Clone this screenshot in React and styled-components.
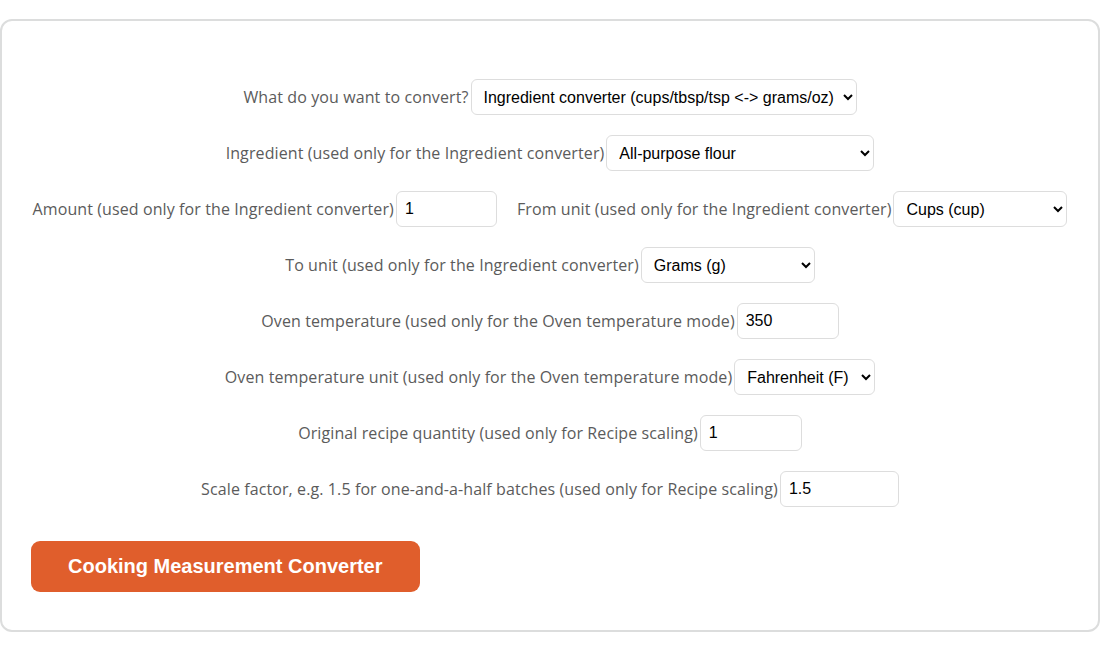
import React from "react";
import styled, { createGlobalStyle } from "styled-components";

const Global = createGlobalStyle`
  html, body { margin: 0; padding: 0; background: #ffffff; }
  body { font-family: "Open Sans", "Noto Sans", sans-serif; }
`;

const Card = styled.div`
  box-sizing: border-box;
  width: 1100px;
  margin-top: 19px;
  border: 2px solid #dcdddd;
  border-radius: 12px;
  padding: 58px 29px 38px 29px;
  background: #fff;
`;

const Form = styled.form`
  display: flex;
  flex-wrap: wrap;
  justify-content: center;
  gap: 20px 20px;
`;

const Field = styled.div`
  display: flex;
  align-items: center;
`;

const Label = styled.label`
  font-family: "Open Sans", "Noto Sans", sans-serif;
  font-size: 16px;
  color: #5b5b5b;
  margin-right: 2px;
  white-space: nowrap;
  letter-spacing: 0.1px;
`;

const Select = styled.select`
  box-sizing: border-box;
  width: ${(p) => p.$w}px;
  height: 36px;
  padding: 0 6px 0 8px;
  font-family: "Liberation Sans", Arial, sans-serif;
  font-size: 16px;
  color: #000;
  background: #fff;
  border: 1px solid #dddddd;
  border-radius: 6px;
`;

const Input = styled.input`
  box-sizing: border-box;
  width: ${(p) => p.$w}px;
  height: 36px;
  padding: 0 8px;
  font-family: "Liberation Sans", Arial, sans-serif;
  font-size: 16px;
  color: #000;
  background: #fff;
  border: 1px solid #dddddd;
  border-radius: 6px;
`;

const Button = styled.button`
  margin-top: 34px;
  height: 51px;
  padding: 0 37px;
  border: none;
  border-radius: 9px;
  background: #e05e2c;
  color: #fff;
  font-family: "Liberation Sans", Arial, sans-serif;
  font-weight: 700;
  font-size: 20px;
  cursor: pointer;
`;

const fields = [
  { label: "What do you want to convert?", type: "select", w: 386, value: "ing", options: [["ing", "Ingredient converter (cups/tbsp/tsp <-> grams/oz)"], ["oven", "Oven temperature"], ["scale", "Recipe scaling"]] },
  { label: "Ingredient (used only for the Ingredient converter)", type: "select", w: 268, value: "flour", options: [["flour", "All-purpose flour"], ["sugar", "Granulated sugar"], ["butter", "Butter"]] },
  { label: "Amount (used only for the Ingredient converter)", type: "input", w: 101, value: "1" },
  { label: "From unit (used only for the Ingredient converter)", type: "select", w: 174, value: "cup", options: [["cup", "Cups (cup)"], ["tbsp", "Tablespoons (tbsp)"], ["tsp", "Teaspoons (tsp)"]] },
  { label: "To unit (used only for the Ingredient converter)", type: "select", w: 174, value: "g", options: [["g", "Grams (g)"], ["oz", "Ounces (oz)"]] },
  { label: "Oven temperature (used only for the Oven temperature mode)", type: "input", w: 102, value: "350" },
  { label: "Oven temperature unit (used only for the Oven temperature mode)", type: "select", w: 141, value: "F", options: [["F", "Fahrenheit (F)"], ["C", "Celsius (C)"]] },
  { label: "Original recipe quantity (used only for Recipe scaling)", type: "input", w: 102, value: "1" },
  { label: "Scale factor, e.g. 1.5 for one-and-a-half batches (used only for Recipe scaling)", type: "input", w: 119, value: "1.5" },
];

export default function App() {
  return (
    <>
      <Global />
      <Card>
        <Form onSubmit={(e) => e.preventDefault()}>
          {fields.map((f, i) => (
            <Field key={i}>
              <Label htmlFor={`f${i}`}>{f.label}</Label>
              {f.type === "select" ? (
                <Select id={`f${i}`} $w={f.w} defaultValue={f.value}>
                  {f.options.map(([v, t]) => (
                    <option key={v} value={v}>{t}</option>
                  ))}
                </Select>
              ) : (
                <Input id={`f${i}`} $w={f.w} defaultValue={f.value} />
              )}
            </Field>
          ))}
        </Form>
        <Button type="button">Cooking Measurement Converter</Button>
      </Card>
    </>
  );
}
